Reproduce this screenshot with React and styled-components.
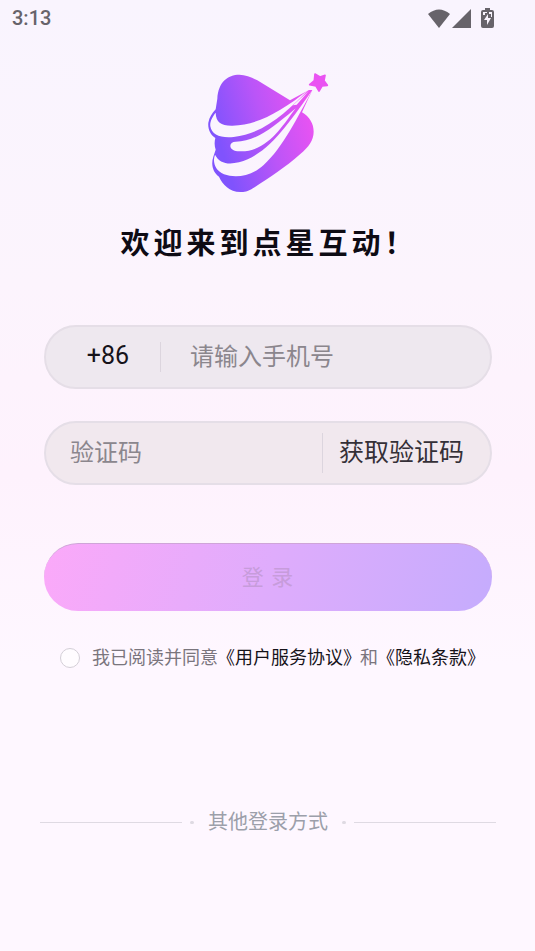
import React, { useState } from "react"
import styled, { createGlobalStyle } from "styled-components"

const GlobalStyle = createGlobalStyle`
  * {
    box-sizing: border-box;
  }

  body {
    margin: 0;
    background: #fef7ff;
    font-family: Roboto, "Noto Sans CJK SC", sans-serif;
  }

  button,
  input {
    font-family: inherit;
  }
`

const Page = styled.div`
  min-height: 100vh;
  background: linear-gradient(#f9f4fe 0%, #fcf4fd 30%, #fef2fd 50%, #fef7ff 70%);
`

const StatusBar = styled.header`
  display: flex;
  align-items: center;
  justify-content: space-between;
  height: 36px;
  padding: 0 41px 0 12px;
  color: #67636a;
  font-size: 20px;
  font-weight: 500;
  line-height: 38px;
`

const StatusIcons = styled.div`
  display: flex;
  align-items: center;
  gap: 2px;

  svg:last-child {
    margin-left: 8px;
  }
`

const Main = styled.main`
  display: flex;
  flex-direction: column;
  padding: 24px 43px 24px 44px;
`

const LogoImage = styled.svg`
  display: block;
  align-self: center;
`

const Title = styled.h1`
  margin: 17px 0 59px;
  color: #0e0b14;
  font-size: 29px;
  font-weight: 700;
  line-height: 44px;
  letter-spacing: 4px;
  text-align: center;
  text-indent: 2px;
`

const Form = styled.form`
  display: flex;
  flex-direction: column;
`

const Field = styled.div`
  display: flex;
  align-items: center;
  height: 64px;
  margin-bottom: 32px;
  border: 2px solid #e5dee7;
  border-radius: 32px;
  background: ${({ $tint }) => $tint};
`

const Separator = styled.span`
  flex: none;
  width: 1px;
  height: ${({ $height }) => $height};
  background: #dcd5de;
`

const AreaCode = styled.button`
  width: 114px;
  padding: 0 0 4px 10px;
  border: 0;
  background: none;
  color: #16131a;
  font-size: 25px;
`

const TextInput = styled.input`
  flex: 1;
  min-width: 0;
  height: 100%;
  padding: 0 0 0 ${({ $indent }) => $indent};
  border: 0;
  outline: 0;
  background: none;
  color: #16131a;
  font-size: 24px;

  &::placeholder {
    color: #8b868d;
    opacity: 1;
  }
`

const CodeButton = styled.button`
  padding: 0 26px 6px 16px;
  border: 0;
  background: none;
  color: #353037;
  font-size: 25px;
`

const LoginButton = styled.button`
  height: 68px;
  margin-top: 26px;
  padding: 0 0 6px;
  border: 0;
  border-top: 1px solid #cfa4d8;
  border-radius: 34px;
  background: linear-gradient(105deg, #fba9f9 0%, #dfacfc 50%, #c5acfd 100%);
  color: #c79cdb;
  font-size: 22px;
  letter-spacing: 1px;
`

const Agreement = styled.div`
  display: flex;
  align-items: center;
  gap: 12px;
  margin: 32px 0 0 16px;
  color: #7a757d;
  font-size: 18px;
  line-height: 30px;
  white-space: nowrap;

  a {
    margin: 0 -1px;
    color: #16131a;
    text-decoration: none;
  }
`

const Checkbox = styled.input`
  appearance: none;
  flex: none;
  width: 20px;
  height: 20px;
  margin: 0;
  border: 1px solid #d4cfd7;
  border-radius: 50%;
  background: #fffcff;

  &:checked {
    border: 5px solid #b45cf8;
  }
`

const OtherLogin = styled.div`
  display: flex;
  align-items: center;
  gap: 8px;
  margin: 134px -4px 0;
  color: #9c9faa;
  font-size: 20px;
  line-height: 30px;
`

const Line = styled.span`
  flex: 1;
  height: 1px;
  background: #dfdae3;
`

const Dot = styled.span`
  width: 4px;
  height: 3px;
  border-radius: 2px;
  background: #dfdae3;
`

const OtherLabel = styled.span`
  margin: 0 6px;
`

const Logo = () => (
  <LogoImage width="145" height="145" viewBox="0 0 435 435" aria-hidden="true">
    <defs>
      <linearGradient id="brand" gradientUnits="userSpaceOnUse" x1="70" y1="245" x2="345" y2="160">
        <stop offset="0" stopColor="#8053fd" />
        <stop offset="0.5" stopColor="#ba55f8" />
        <stop offset="1" stopColor="#ea53f2" />
      </linearGradient>
      <mask id="streaks" maskUnits="userSpaceOnUse" x="0" y="0" width="435" height="435">
        <rect width="435" height="435" fill="#fff" />
        <path d="M59 158C60 187 76 198 110 197C186 195 255 155 336 91C275 153 208 220 113 231C73 235 47 224 43 199C41 184 50 169 59 158Z" />
        <path d="M119 245C181 244 231 202 293 150L299 145C260 196 218 273 135 274C114 275 104 268 103 258C103 250 109 245 119 245Z" />
        <path d="M57 284C70 309 94 315 129 307C219 284 283 182 349 91C304 172 261 263 203 315C165 350 118 355 84 343C56 332 49 304 57 284Z" />
        <path d="M291 136L338 93L302 134Z" />
      </mask>
    </defs>
    <g fill="url(#brand)">
      <g mask="url(#streaks)">
        <path d="M64 116C67 66 95 44 130 44C149 44 167 52 184 61L282 121L339 90L349 90L318 157C341 171 353 191 353 215C353 240 338 261 313 282C267 323 218 354 177 381C157 394 146 397 133 396C100 395 80 374 69 350C51 337 44 314 52 290L59 269C55 257 55 246 58 234C43 225 35 207 37 188C40 172 48 160 59 148Z" />
      </g>
      <path
        d="M357 42L372 51L387 46L384 62L394 76L378 78L369 93L360 78L341 74L355 62Z"
        stroke="url(#brand)"
        strokeWidth="5"
        strokeLinejoin="round"
      />
    </g>
  </LogoImage>
)

const WifiIcon = () => (
  <svg width="22" height="19" viewBox="0 0 22 19" fill="currentColor">
    <path d="M0 5Q11 -4 22 5L11 19Z" />
  </svg>
)

const SignalIcon = () => (
  <svg width="19" height="19" viewBox="0 0 19 19" fill="currentColor">
    <path d="M19 0V19H0Z" />
  </svg>
)

const BatteryIcon = () => (
  <svg width="13" height="20" viewBox="0 0 13 20" fill="currentColor">
    <path
      fillRule="evenodd"
      d="M4 0H9V2H11Q13 2 13 4V18Q13 20 11 20H2Q0 20 0 18V4Q0 2 2 2H4ZM2 4V7H4V5H6V4ZM8 4V6H10V9H11V4ZM7 6L3 12H6V17L10 10H7Z"
    />
  </svg>
)

const App = () => {
  const [agreed, setAgreed] = useState(false)

  return (
    <Page>
      <GlobalStyle />
      <StatusBar>
        <span>3:13</span>
        <StatusIcons>
          <WifiIcon />
          <SignalIcon />
          <BatteryIcon />
        </StatusIcons>
      </StatusBar>
      <Main>
        <Logo />
        <Title>欢迎来到点星互动！</Title>
        <Form onSubmit={e => e.preventDefault()}>
          <Field $tint="#eee8ef">
            <AreaCode type="button">+86</AreaCode>
            <Separator $height="30px" />
            <TextInput
              type="tel"
              aria-label="手机号"
              placeholder="请输入手机号"
              $indent="29px"
            />
          </Field>
          <Field $tint="#f1e8ee">
            <TextInput
              type="text"
              aria-label="验证码"
              placeholder="验证码"
              $indent="24px"
            />
            <Separator $height="40px" />
            <CodeButton type="button">获取验证码</CodeButton>
          </Field>
          <LoginButton type="submit">登 录</LoginButton>
          <Agreement>
            <Checkbox
              type="checkbox"
              id="agree"
              checked={agreed}
              onChange={e => setAgreed(e.target.checked)}
            />
            <label htmlFor="agree">
              我已阅读并同意<a href="#terms">《用户服务协议》</a>和
              <a href="#privacy">《隐私条款》</a>
            </label>
          </Agreement>
        </Form>
        <OtherLogin>
          <Line />
          <Dot />
          <OtherLabel>其他登录方式</OtherLabel>
          <Dot />
          <Line />
        </OtherLogin>
      </Main>
    </Page>
  )
}

export default App
